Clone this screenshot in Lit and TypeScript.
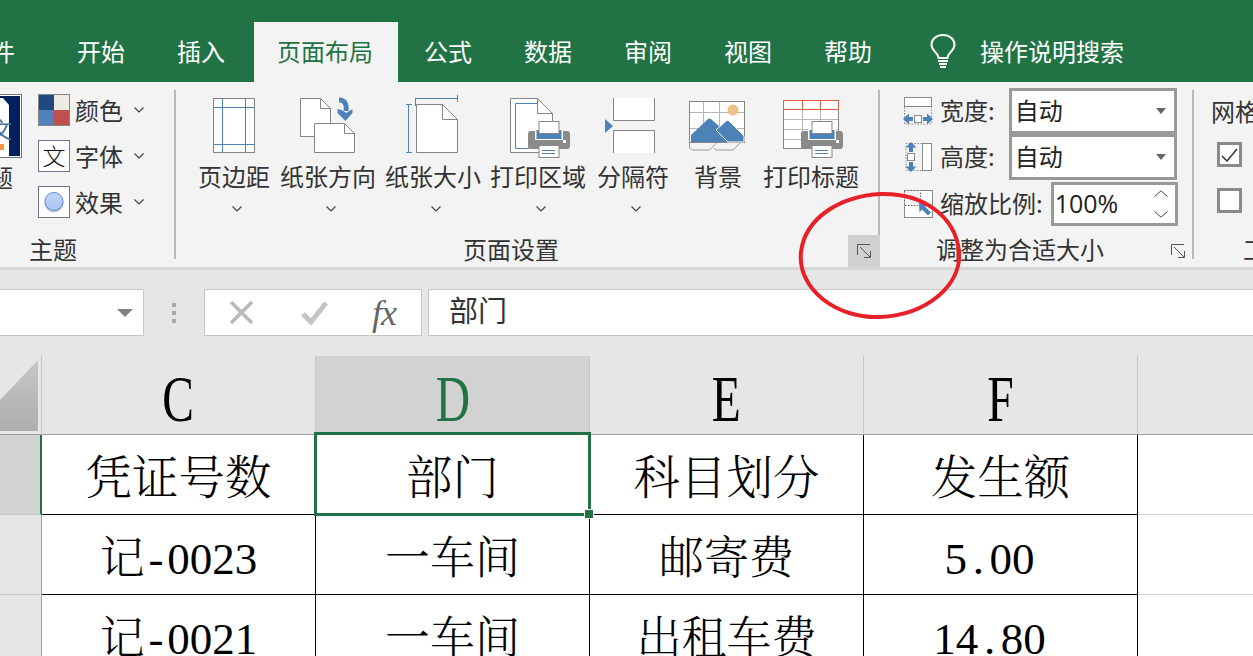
import { LitElement, html, css, svg } from 'lit';
import { customElement } from 'lit/decorators.js';

const GREY = '#858585';
const BLUE = '#4d82b8';

const chevron = html`<svg class="chev" width="10" height="6" viewBox="0 0 10 6"><polyline points="0.5,0.5 5,5 9.5,0.5" fill="none" stroke="#444" stroke-width="1.2"/></svg>`;

// printer shared by print area and print titles, dx is the x of the body
const printer = (dx: number) => svg`
  <rect x=${dx} y="35" width="42" height="18" rx="3" fill="#8a8a8a"/>
  <rect x=${dx + 7} y="33" width="28" height="11" fill="#fff"/>
  <rect x=${dx + 8.5} y="34" width="25" height="9" fill=${BLUE}/>
  <rect x=${dx + 11} y="25.5" width="20" height="12" fill="#fff" stroke=${GREY} stroke-width="1"/>
  <rect x=${dx + 11} y="49.5" width="20" height="12" fill="#fff" stroke=${GREY} stroke-width="1"/>
  <path d="M${dx + 14} 54.5h13M${dx + 14} 57.5h13" stroke=${BLUE} stroke-width="1"/>
  <rect x=${dx + 35} y="44" width="3" height="3" fill="#fff"/>`;

const pageIcons = {
  margins: svg`
    <rect x="15.5" y="2.5" width="41" height="54" fill="#fff" stroke=${GREY} stroke-width="1"/>
    <path d="M24.5 3v53M47.5 3v53M16 11.5h40M16 48.5h40" stroke=${BLUE} stroke-width="1"/>`,
  orientation: svg`
    <path d="M20.5 2.5h20l10 10v28h-30z" fill="#fff" stroke=${GREY}/>
    <path d="M40.5 2.5v10h10" fill="none" stroke=${GREY}/>
    <path d="M34.5 27.5h30l10 10v19h-40z" fill="#fff" stroke=${GREY}/>
    <path d="M64.5 27.5v10h10" fill="none" stroke=${GREY}/>
    <path d="M59 4c5 0 8 3 7 11" fill="none" stroke=${BLUE} stroke-width="5"/>
    <path d="M57.500 13l4 1 5 3 6-4v4l-7 8-8-8z" fill=${BLUE}/>`,
  size: svg`
    <path d="M30.5 2v8M30.5 2.5h42M72.5 -1v7" fill="none" stroke=${BLUE}/>
    <path d="M23.5 8v49M21 8.5h6M21 56.5h6" fill="none" stroke=${BLUE}/>
    <path d="M31.5 8.5h26l15 15v33h-41z" fill="#fff" stroke=${GREY}/>
    <path d="M57.5 8.5v15h15" fill="none" stroke=${GREY}/>`,
  area: svg`
    <path d="M20.5 2.5h27l15 15v39h-42z" fill="#fff" stroke=${GREY}/>
    <path d="M47.5 2.5v15h15" fill="none" stroke=${GREY}/>
    <path d="M47 7.5H25.5v45h14" fill="none" stroke=${BLUE}/>
    ${printer(38)}`,
  breaks: svg`
    <path d="M16.5 2v22.5h41V2" fill="#fff" stroke=${GREY}/>
    <path d="M16.5 57V34.5h41V57" fill="#fff" stroke=${GREY}/>
    <path d="M8 23l8 7-8 7z" fill=${BLUE}/>`,
  background: svg`
    <rect x="-4.5" y="5.5" width="55" height="41" fill="#fff" stroke=${GREY}/>
    <path d="M9.5 6v40M25.5 6v40M-4 16.5h54M-4 32.5h54" stroke="#b5b5b5"/>
    <circle cx="39" cy="14" r="5.5" fill="#ecc388"/>
    <path d="M-3 46v-7l16-15c2-2 3-2 5 0l25 22z" fill=${BLUE}/>
    <path d="M22 34l9-8c2-2 3-2 5 0l14 14v6H34z" fill=${BLUE} stroke="#fff"/>
    <path d="M-4.5 47v5l3 2h17l7-7M20 52l2 2h17l7-7" fill="none" stroke="#9a9a9a"/>`,
  titles: svg`
    <rect x="20.5" y="4.5" width="55" height="48" fill="#fff" stroke=${GREY}/>
    <path d="M39.5 14v38M57.5 14v38M21 23.5h54M21 33.5h54M21 43.5h54" stroke="#b5b5b5"/>
    <path d="M20.5 4.5h55v9h-55zM39.5 4.5v9M57.5 4.5v9" fill="#fff" stroke="#d9603f"/>
    ${printer(38)}`,
};

const pageButtons = [
  { label: '页边距', icon: pageIcons.margins, w: 72, ml: 0, more: true },
  { label: '纸张方向', icon: pageIcons.orientation, w: 96, ml: 10, more: true },
  { label: '纸张大小', icon: pageIcons.size, w: 96, ml: 9, more: true },
  { label: '打印区域', icon: pageIcons.area, w: 96, ml: 9, more: true },
  { label: '分隔符', icon: pageIcons.breaks, w: 72, ml: 11, more: true },
  { label: '背景', icon: pageIcons.background, w: 48, ml: 25, more: false },
  { label: '打印标题', icon: pageIcons.titles, w: 96, ml: 21, more: false },
];

const tabs = ['开始', '插入', '页面布局', '公式', '数据', '审阅', '视图', '帮助'];

const launcher = html`<svg width="16" height="16" viewBox="0 0 16 16"><path d="M1.5 12V1.500H14M4 4l10 10M14.500 8v6.500H8" fill="none" stroke="#555" stroke-width="1"/></svg>`;

interface Cell { text: unknown; num?: boolean }

const hw = (c: string) => html`<span class="hw">${c}</span>`;

const rows: Cell[][] = [
  [{ text: '凭证号数' }, { text: '部门' }, { text: '科目划分' }, { text: '发生额' }],
  [
    { text: html`记${hw('-')}0023` },
    { text: '一车间' },
    { text: '邮寄费' },
    { text: html`5${hw('.')}00`, num: true },
  ],
  [
    { text: html`记${hw('-')}0021` },
    { text: '一车间' },
    { text: '出租车费' },
    { text: html`14${hw('.')}80`, num: true },
  ],
];

@customElement('app-root')
export class AppRoot extends LitElement {
  static styles = css`
    :host {
      display: block;
      font-family: 'Noto Sans CJK SC', 'Noto Sans', sans-serif;
      font-size: 24px;
      color: #333;
    }
    .app {
      position: relative;
      width: 1253px;
      height: 656px;
      overflow: hidden;
      background: #fff;
    }

    /* title tabs */
    .tabs {
      display: flex;
      align-items: flex-end;
      height: 82px;
      background: #217346;
      color: #fff;
      padding-left: 51px;
      box-sizing: border-box;
      position: relative;
    }
    .tab {
      height: 60px;
      line-height: 57px;
      padding: 0 26px;
      white-space: nowrap;
    }
    .tab.file {
      position: absolute;
      left: -59px;
      bottom: 0;
    }
    .tab.active {
      background: #f3f3f3;
      color: #217346;
      padding: 0 25px 0 23px;
      margin: 0 0 0 3px;
    }
    .bulb {
      margin: 0 24px 14px 32px;
      display: block;
    }
    .search {
      height: 60px;
      line-height: 57px;
      white-space: nowrap;
    }

    /* ribbon */
    .ribbon {
      display: flex;
      height: 185px;
      background: #f3f3f3;
      border-bottom: 3px solid #d6d6d6;
    }
    .group {
      position: relative;
      display: flex;
      flex-direction: column;
      flex: none;
    }
    .group-body {
      flex: 1;
      display: flex;
      min-height: 0;
    }
    .group-label {
      height: 35px;
      line-height: 33px;
      text-align: center;
      white-space: nowrap;
    }
    .sep {
      flex: none;
      width: 2px;
      height: 169px;
      margin-top: 8px;
      background: #b9b9b9;
    }
    .launcher {
      position: absolute;
      right: -2px;
      bottom: 0;
      width: 32px;
      height: 32px;
      display: flex;
      align-items: center;
      justify-content: center;
    }
    .launcher.hot {
      background: #d0d0d0;
    }
    .launcher.small {
      right: 6px;
      bottom: 8px;
      width: 16px;
      height: 16px;
    }

    .theme {
      width: 174px;
    }
    .theme-label {
      padding-right: 68px;
    }
    .theme-big {
      flex: none;
      width: 66px;
      margin-left: -44px;
      padding-top: 12px;
      display: flex;
      flex-direction: column;
      align-items: center;
    }
    .theme-big span {
      line-height: 30px;
      margin-top: 4px;
    }
    .theme-list {
      margin: 12px 0 0 16px;
      display: flex;
      flex-direction: column;
      gap: 14px;
    }
    .theme-row {
      display: flex;
      align-items: center;
      height: 32px;
      white-space: nowrap;
    }
    .theme-row span {
      margin-left: 5px;
      margin-right: 11px;
      padding-bottom: 1px;
    }
    .chev {
      display: block;
      flex: none;
    }

    .page {
      width: 702px;
    }
    .page .group-label {
      padding-right: 32px;
    }
    .page .group-body {
      padding: 14px 0 0 22px;
    }
    .big-btn {
      flex: none;
      display: flex;
      flex-direction: column;
      align-items: center;
    }
    .big-btn svg.icon {
      display: block;
      overflow: visible;
    }
    .big-btn span {
      line-height: 30px;
      margin-top: 5px;
      white-space: nowrap;
    }
    .big-btn .chev {
      margin: 15px 0 0 6px;
    }

    .scale {
      width: 312px;
    }
    .scale .group-label {
      padding-right: 32px;
    }
    .scale .group-body {
      flex-direction: column;
      padding: 6px 0 0 23px;
    }
    .scale-row {
      display: flex;
      align-items: center;
      height: 46px;
      white-space: nowrap;
    }
    .scale-row > span,
    .field > span {
      padding-bottom: 3px;
    }
    .scale-row svg.rowicon {
      flex: none;
      margin-right: 7px;
    }
    .field {
      box-sizing: border-box;
      height: 46px;
      border: 3px solid #999;
      background: #fff;
      display: flex;
      align-items: center;
      justify-content: space-between;
      padding: 0 8px 0 3px;
      color: #222;
    }
    .field.wide {
      width: 168px;
      margin-left: 14px;
    }
    .scale-row.third {
      margin-top: 2px;
      height: 44px;
    }
    .field.spin {
      width: 127px;
      height: 44px;
      margin-left: 8px;
      padding-left: 1px;
      font-family: 'Open Sans', 'Noto Sans', sans-serif;
      font-size: 25px;
    }
    .caret {
      width: 0;
      height: 0;
      border: 5px solid transparent;
      border-top: 6px solid #666;
      border-bottom: 0;
    }
    .spinner {
      display: flex;
      flex-direction: column;
      gap: 14px;
      margin-right: -1px;
    }

    .options {
      width: 200px;
    }
    .options .group-body {
      flex-direction: column;
      padding: 12px 0 0 17px;
    }
    .options .group-label {
      text-align: left;
      padding-left: 49px;
    }
    .opt-title {
      line-height: 34px;
      white-space: nowrap;
    }
    .check {
      box-sizing: border-box;
      width: 25px;
      height: 25px;
      border: 3px solid #8a8a8a;
      background: #fff;
      margin: 14px 0 0 6px;
      display: flex;
      align-items: center;
      justify-content: center;
    }
    .check + .check {
      margin-top: 21px;
    }

    /* formula bar */
    .formula {
      display: flex;
      align-items: flex-start;
      height: 86px;
      box-sizing: border-box;
      padding-top: 19px;
      background: #e6e6e6;
    }
    .box {
      box-sizing: border-box;
      height: 47px;
      background: #fff;
      border: 1px solid #c6c6c6;
      display: flex;
      align-items: center;
    }
    .namebox {
      width: 144px;
      border-left: 0;
      justify-content: flex-end;
      padding-right: 10px;
    }
    .namebox i {
      display: block;
      width: 0;
      height: 0;
      border: 8px solid transparent;
      border-top: 8px solid #808080;
      border-bottom: 0;
    }
    .dots {
      width: 4px;
      height: 20px;
      margin: 14px 28px 0 28px;
      background: repeating-linear-gradient(#a8a8a8 0 4px, transparent 4px 8px);
    }
    .fxbox {
      width: 218px;
      margin-right: 6px;
      padding-left: 24px;
      gap: 47px;
    }
    .fx {
      font-family: 'Liberation Serif', serif;
      font-style: italic;
      font-size: 36px;
      color: #666;
      letter-spacing: -1px;
      line-height: 40px;
      margin-left: -3px;
    }
    .input {
      flex: 1;
      border-right: 0;
      padding: 0 0 7px 20px;
      font-size: 29px;
      color: #333;
    }

    /* sheet */
    .sheet {
      position: relative;
      display: grid;
      grid-template-columns: 42px repeat(4, 274px) 1fr;
      grid-template-rows: 79px 80px 80px 80px;
      font-family: 'Liberation Serif', 'Noto Serif CJK SC', 'Noto Sans CJK SC', serif;
      color: #000;
    }
    .corner {
      background: #e6e6e6;
      border-bottom: 1px solid #9f9f9f;
      border-right: 1px solid #c6c6c6;
      box-sizing: border-box;
    }
    .corner svg {
      display: block;
    }
    .col {
      box-sizing: border-box;
      background: #e6e6e6;
      border-right: 1px solid #c6c6c6;
      border-bottom: 1px solid #9f9f9f;
      display: flex;
      align-items: center;
      justify-content: center;
      padding-top: 7px;
      font-size: 66px;
      line-height: 71px;
    }
    .col span {
      display: block;
      transform: scaleX(0.72);
    }
    .col.sel {
      background: #d2d2d2;
      color: #217346;
    }
    .row-head {
      box-sizing: border-box;
      background: #e6e6e6;
      border-right: 1px solid #9f9f9f;
      border-bottom: 1px solid #c6c6c6;
    }
    .row-head.sel {
      background: #d2d2d2;
      border-right: 2px solid #217346;
    }
    .cell {
      box-sizing: border-box;
      border-right: 1px solid #000;
      border-bottom: 1px solid #000;
      display: flex;
      align-items: center;
      justify-content: center;
      padding-top: 9px;
      font-size: 45px;
      line-height: 70px;
      font-weight: 300;
      white-space: nowrap;
    }
    .cell.title {
      font-size: 46.5px;
    }
    .cell.num {
      padding-right: 22px;
    }
    .hw {
      display: inline-block;
      width: 0.5em;
      text-align: center;
    }
    .blank {
      border-bottom: 1px solid #d4d4d4;
    }
    .blank.head {
      background: #e6e6e6;
      border-bottom: 1px solid #9f9f9f;
    }
    .selection {
      position: absolute;
      left: 314px;
      top: 76px;
      width: 277px;
      height: 84px;
      box-sizing: border-box;
      border: 3px solid #217346;
      pointer-events: none;
    }
    .handle {
      position: absolute;
      right: -6px;
      bottom: -6px;
      width: 8px;
      height: 8px;
      background: #217346;
      border: 1px solid #fff;
    }
    .circle {
      position: absolute;
      left: 795px;
      top: 190px;
      pointer-events: none;
    }
  `;

  private renderThemeIcons() {
    return {
      colors: html`<svg width="32" height="32" viewBox="0 0 32 32">
        <rect width="32" height="32" fill="#868686"/>
        <rect x="1" y="1" width="15" height="15" fill="#1f497d"/>
        <rect x="16" y="1" width="15" height="15" fill="#eeece1"/>
        <rect x="1" y="16" width="15" height="15" fill="#4f81bd"/>
        <rect x="16" y="16" width="15" height="15" fill="#c0504d"/>
      </svg>`,
      fonts: html`<svg width="32" height="32" viewBox="0 0 32 32">
        <rect x="0.5" y="0.5" width="31" height="31" fill="#fff" stroke="#6b7488"/>
        <text x="16" y="25" text-anchor="middle" font-size="23" font-weight="300" fill="#111" font-family="Noto Sans CJK SC">文</text>
      </svg>`,
      effects: html`<svg width="32" height="32" viewBox="0 0 32 32">
        <defs>
          <linearGradient id="fx" x1="0" y1="0" x2="0" y2="1">
            <stop offset="0" stop-color="#c3d6f7"/>
            <stop offset="1" stop-color="#a9c4f5"/>
          </linearGradient>
        </defs>
        <rect x="0.5" y="0.5" width="31" height="31" fill="#fff" stroke="#6b7488"/>
        <circle cx="16" cy="17" r="9.5" fill="#c9c9c9"/>
        <circle cx="16" cy="15.5" r="9" fill="url(#fx)" stroke="#5b8bd6"/>
      </svg>`,
    };
  }

  render() {
    const icons = this.renderThemeIcons();
    return html`
      <div class="app">
        <div class="tabs">
          <div class="tab file">文件</div>
          ${tabs.map((t) => html`<div class="tab ${t === '页面布局' ? 'active' : ''}">${t}</div>`)}
          <svg class="bulb" width="26" height="34" viewBox="0 0 26 34">
            <path d="M8.5 24c0-5-7-7-7-13.5C1.500 5 6.500 1 13 1s11.500 4 11.500 9.500C24.500 17 17.500 19 17.500 24z" fill="none" stroke="#fff" stroke-width="2"/>
            <path d="M8 27h10M9 30h8M10 33h6" stroke="#fff" stroke-width="2"/>
          </svg>
          <div class="search">操作说明搜索</div>
        </div>

        <div class="ribbon">
          <section class="group theme">
            <div class="group-body">
              <div class="theme-big">
                <svg width="66" height="64" viewBox="0 0 66 64">
                  <rect x="0.500" y="0.500" width="65" height="63" fill="#fff" stroke="#6b7488"/>
                  <rect x="2" y="2" width="62" height="60" fill="#002060"/>
                  <path d="M30 4h17l6 7v51H30z" fill="#fff"/>
                  <text x="45" y="44" font-size="22" text-anchor="middle" fill="#4d6f9e" font-family="Noto Sans CJK SC">文</text>
                  <rect x="40" y="50" width="8" height="6" fill="#f79646"/>
                </svg>
                <span>主题</span>
              </div>
              <div class="theme-list">
                <div class="theme-row">${icons.colors}<span>颜色</span>${chevron}</div>
                <div class="theme-row">${icons.fonts}<span>字体</span>${chevron}</div>
                <div class="theme-row">${icons.effects}<span>效果</span>${chevron}</div>
              </div>
            </div>
            <div class="group-label theme-label">主题</div>
          </section>
          <div class="sep"></div>

          <section class="group page">
            <div class="group-body">
              ${pageButtons.map(
                (b) => html`
                  <div class="big-btn" style="width:${b.w}px;margin-left:${b.ml}px">
                    <svg class="icon" width=${b.w} height="60" viewBox="0 0 ${b.w} 60">${b.icon}</svg>
                    <span>${b.label}</span>
                    ${b.more ? chevron : ''}
                  </div>
                `
              )}
            </div>
            <div class="group-label">页面设置</div>
            <div class="launcher hot">${launcher}</div>
          </section>
          <div class="sep"></div>

          <section class="group scale">
            <div class="group-body">
              <div class="scale-row">
                <svg class="rowicon" width="30" height="30" viewBox="0 0 30 30">
                  <rect x="1.500" y="1.500" width="27" height="9" fill="#fff" stroke="#8a8a8a"/>
                  <path d="M1.500 11v17h27V11" fill="none" stroke="#8a8a8a" stroke-dasharray="1.500 1.500"/>
                  <rect x="11.500" y="19.500" width="7" height="7" fill="#fff" stroke="#8a8a8a"/>
                  <path d="M0 23l6-5.500v3.500h4v4H6v3.500zM30 23l-6-5.500v3.500h-4v4h4v3.500z" fill="${BLUE}"/>
                </svg>
                <span>宽度:</span>
                <div class="field wide"><span>自动</span><i class="caret"></i></div>
              </div>
              <div class="scale-row second">
                <svg class="rowicon" width="30" height="30" viewBox="0 0 30 30">
                  <rect x="19.500" y="1.500" width="9" height="27" fill="#fff" stroke="#8a8a8a"/>
                  <path d="M19 1.500H3v27h16" fill="none" stroke="#8a8a8a" stroke-dasharray="1.500 1.500"/>
                  <rect x="4.500" y="11.500" width="7" height="7" fill="#fff" stroke="#8a8a8a"/>
                  <path d="M8 0l5.500 5.500H10V10H6V5.500H2.500zM8 30l5.500-5.500H10V20H6v4.500H2.500z" fill="${BLUE}"/>
                </svg>
                <span>高度:</span>
                <div class="field wide"><span>自动</span><i class="caret"></i></div>
              </div>
              <div class="scale-row third">
                <svg class="rowicon" width="30" height="30" viewBox="0 0 30 30">
                  <rect x="1.500" y="1.500" width="28" height="27" fill="#fff" stroke="#8a8a8a"/>
                  <rect x="1.500" y="1.500" width="16" height="15" fill="#f3f3f3" stroke="#666" stroke-dasharray="1.500 1.500"/>
                  <path d="M16 14l9 1-3 2.500 6 6-3 3-6-6-2.500 3z" fill="${BLUE}"/>
                </svg>
                <span>缩放比例:</span>
                <div class="field spin">
                  <span>100%</span>
                  <div class="spinner">
                    <svg width="14" height="7" viewBox="0 0 14 7"><polyline points="0.500,6.500 7,0.800 13.500,6.500" fill="none" stroke="#444"/></svg>
                    <svg width="14" height="7" viewBox="0 0 14 7"><polyline points="0.500,0.500 7,6.200 13.500,0.500" fill="none" stroke="#444"/></svg>
                  </div>
                </div>
              </div>
            </div>
            <div class="group-label">调整为合适大小</div>
            <div class="launcher small">${launcher}</div>
          </section>
          <div class="sep"></div>

          <section class="group options">
            <div class="group-body">
              <div class="opt-title">网格线</div>
              <div class="check">
                <svg width="17" height="14" viewBox="0 0 17 14"><polyline points="1,8 6,13 16,1" fill="none" stroke="#333" stroke-width="1.500"/></svg>
              </div>
              <div class="check"></div>
            </div>
            <div class="group-label">工作表选项</div>
          </section>
        </div>

        <div class="formula">
          <div class="box namebox"><i></i></div>
          <div class="dots"></div>
          <div class="box fxbox">
            <svg width="25" height="25" viewBox="0 0 25 25"><path d="M2 2l21 21M23 2L2 23" stroke="#b9b9b9" stroke-width="3.500"/></svg>
            <svg width="27" height="25" viewBox="0 0 27 25"><path d="M2 14l8 8L25 3" fill="none" stroke="#c4c4c4" stroke-width="5"/></svg>
            <span class="fx">fx</span>
          </div>
          <div class="box input">部门</div>
        </div>

        <div class="sheet">
          <div class="corner">
            <svg width="38" height="76" viewBox="0 0 38 76">
              <defs>
                <linearGradient id="cn" x1="0" y1="0" x2="0" y2="1">
                  <stop offset="0" stop-color="#c6c6c6"/>
                  <stop offset="1" stop-color="#aeaeae"/>
                </linearGradient>
              </defs>
              <path d="M38 4v71H0v-31z" fill="url(#cn)"/>
            </svg>
          </div>
          ${['C', 'D', 'E', 'F'].map((c) => html`<div class="col ${c === 'D' ? 'sel' : ''}"><span>${c}</span></div>`)}
          <div class="blank head"></div>
          ${rows.map(
            (r, i) => html`
              <div class="row-head ${i === 0 ? 'sel' : ''}"></div>
              ${r.map(
                (c) => html`<div class="cell ${i === 0 ? 'title' : ''} ${c.num ? 'num' : ''}">${c.text}</div>`
              )}
              <div class="blank"></div>
            `
          )}
          <div class="selection"><div class="handle"></div></div>
        </div>

        <svg class="circle" width="170" height="136" viewBox="0 0 170 136">
          <path d="M6 62C10 28 45 6 86 4c42-1 74 22 78 57 3 34-32 64-79 66C43 129 2 100 6 62z" fill="none" stroke="#e8202a" stroke-width="4"/>
        </svg>
      </div>
    `;
  }
}
